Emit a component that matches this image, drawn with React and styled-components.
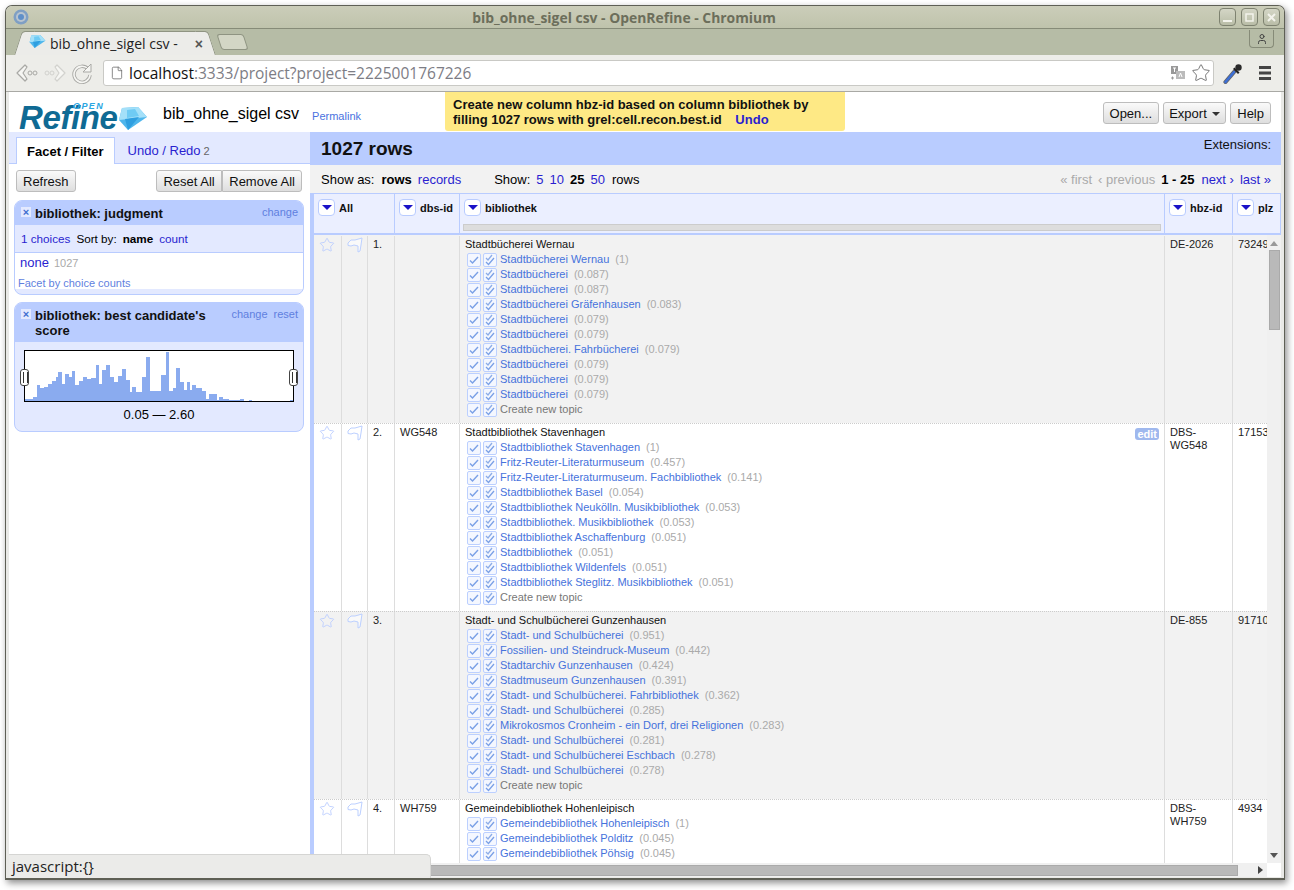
import React from "react";
import styled, { createGlobalStyle } from "styled-components";
import { Star, File as FileIcon, User } from "lucide-react";

const GlobalStyle = createGlobalStyle`
  html, body { margin: 0; padding: 0; background: #fff; }
  body { font-family: "Liberation Sans", Arial, sans-serif; font-size: 13px; color: #000; }
  * { box-sizing: border-box; }
  a { color: #2a1fd0; text-decoration: none; }
`;

const Desktop = styled.div`
  width: 1294px;
  height: 890px;
  padding: 5px 9px 10px 5px;
  overflow: hidden;
`;

const Win = styled.div`
  position: relative;
  width: 1280px;
  height: 875px;
  display: flex;
  flex-direction: column;
  border: 1px solid #5e5f55;
  border-bottom-width: 2px;
  border-radius: 7px 7px 0 0;
  background: #e9e9e6;
  box-shadow: 2px 3px 7px rgba(0, 0, 0, 0.45);
  overflow: hidden;
`;

const TitleBar = styled.div`
  height: 23px;
  flex: none;
  display: flex;
  align-items: center;
  padding: 0 4px 0 7px;
  background: linear-gradient(#cbcdb9, #bfc3ac);
  border-bottom: 1px solid #868b78;
`;

const WinTitle = styled.div`
  flex: 1;
  text-align: center;
  font: bold 13.9px "Open Sans", sans-serif;
  color: #6c6e5b;
`;

const WinButtons = styled.div`
  display: flex;
  gap: 5px;
`;

const WinButton = styled.div`
  width: 17px;
  height: 18px;
  border: 1px solid #7e8270;
  border-radius: 4px;
  display: flex;
  align-items: center;
  justify-content: center;
  background: linear-gradient(#d4d6c6, #b9bda7);
  color: #f3f3ec;
`;

const TabStrip = styled.div`
  height: 26px;
  flex: none;
  display: flex;
  align-items: flex-end;
  padding: 0 10px 0 14px;
  background: #b6bca6;
`;

const Tab = styled.div`
  position: relative;
  width: 182px;
  height: 24px;
  margin-left: 4px;
  padding-left: 5px;
  display: flex;
  align-items: center;
  gap: 4px;
  background: #ecece9;
  border-top: 1px solid #8f9482;
  font: 14px "Open Sans", sans-serif;
  color: #222;
  &::before, &::after {
    content: "";
    position: absolute;
    top: -1px;
    bottom: 0;
    width: 12px;
    background: #ecece9;
    border-top: 1px solid #8f9482;
  }
  &::before { left: -6px; transform: skewX(-18deg); border-left: 1px solid #8f9482; border-radius: 4px 0 0 0; }
  &::after { right: -6px; transform: skewX(18deg); border-right: 1px solid #8f9482; border-radius: 0 4px 0 0; }
`;

const TabText = styled.span`
  position: relative;
  z-index: 1;
  white-space: nowrap;
`;

const TabClose = styled.span`
  position: relative;
  z-index: 1;
  margin-left: auto;
  margin-right: 3px;
  font: bold 14px "Liberation Sans", sans-serif;
  color: #555;
`;

const NewTab = styled.div`
  width: 27px;
  height: 16px;
  margin: 0 0 5px 13px;
  background: #d3d6c5;
  border: 1px solid #8f9482;
  border-radius: 3px;
  transform: skewX(18deg);
`;

const ProfileButton = styled.div`
  margin-left: auto;
  margin-bottom: 7px;
  width: 25px;
  height: 18px;
  border: 1px solid #868b78;
  border-top: none;
  border-radius: 0 0 4px 4px;
  display: flex;
  align-items: center;
  justify-content: center;
  color: #444;
`;

const Toolbar = styled.div`
  height: 37px;
  flex: none;
  display: flex;
  align-items: center;
  padding: 0 10px 0 9px;
  background: #edede9;
  border-bottom: 1px solid #a9a9a5;
`;

const NavIcons = styled.div`
  display: flex;
  align-items: center;
  gap: 4px;
  width: 88px;
`;

const Omnibox = styled.div`
  width: 1111px;
  height: 26px;
  display: flex;
  align-items: center;
  gap: 5px;
  padding: 0 2px 1px 6px;
  background: #fff;
  border: 1px solid #c9c9c5;
  border-radius: 3px;
  font: 15.5px "Open Sans", sans-serif;
  color: #7d7d85;
`;

const Host = styled.span`
  color: #111;
`;

const OmniRight = styled.div`
  margin-left: auto;
  display: flex;
  align-items: center;
  gap: 5px;
`;

const ToolRight = styled.div`
  display: flex;
  align-items: center;
  gap: 15px;
  margin-left: 9px;
`;

const Page = styled.div`
  flex: 1;
  min-height: 0;
  margin: 0 3px 1px;
  display: flex;
  flex-direction: column;
  background: #fff;
`;

const Header = styled.div`
  height: 40px;
  flex: none;
  display: flex;
  align-items: flex-start;
  overflow: hidden;
`;

const Logo = styled.div`
  position: relative;
  width: 154px;
  height: 40px;
  flex: none;
  padding: 12px 0 0 10px;
  display: flex;
  font: italic bold 33px/28px "Liberation Sans", sans-serif;
  color: #0f6a94;
  letter-spacing: -0.4px;
`;

const LogoOpen = styled.span`
  position: absolute;
  left: 64px;
  top: 10px;
  font: italic bold 9px/9px "Liberation Sans", sans-serif;
  letter-spacing: 1.4px;
  color: #2ba6e2;
`;

const LogoGem = styled.span`
  margin: 3px 0 0 1px;
  line-height: 0;
`;

const ProjectName = styled.div`
  font-size: 16px;
  margin-top: 13px;
  white-space: nowrap;
`;

const Permalink = styled.a`
  font-size: 11px;
  margin: 18px 0 0 13px;
  color: #4a72e0;
`;

const Notice = styled.div`
  width: 400px;
  height: 39px;
  margin-left: 84px;
  padding: 5px 8px 0;
  background: #fee985;
  border-radius: 0 0 3px 3px;
  font: bold 13px/15px "Liberation Sans", sans-serif;
  color: #111;
  white-space: nowrap;
`;

const UndoLink = styled.a`
  margin-left: 10px;
`;

const HeaderButtons = styled.div`
  margin-left: auto;
  margin-top: 10px;
  padding-right: 10px;
  display: flex;
  gap: 4px;
`;

const Btn = styled.button`
  height: 22px;
  padding: 0 ${(p) => p.$pad || 6}px;
  font: 13px "Liberation Sans", sans-serif;
  color: #111;
  background: linear-gradient(#fafafa, #dedede);
  border: 1px solid #bdbdbd;
  border-radius: ${(p) => p.$radius || "3px"};
  white-space: nowrap;
`;

const Caret = styled.span`
  display: inline-block;
  margin-left: 5px;
  vertical-align: 2px;
  border: 4px solid transparent;
  border-top-color: #333;
  border-bottom: none;
`;

const Main = styled.div`
  flex: 1;
  min-height: 0;
  display: flex;
`;

const Side = styled.div`
  width: 301px;
  flex: none;
`;

const Tabs = styled.div`
  height: 32px;
  display: flex;
  align-items: flex-end;
  padding-left: 7px;
  background: #e3e9ff;
  border-bottom: 1px solid #b9ccff;
`;

const SideTab = styled.div`
  height: 27px;
  padding: 6px 10px 0 ${(p) => (p.$active ? 10 : 13)}px;
  margin-bottom: -1px;
  font-size: 13px;
  ${(p) => p.$active && "font-weight: bold; background: #fff; border: 1px solid #b9ccff; border-bottom: none;"}
`;

const TabCount = styled.span`
  font-size: 11px;
  color: #666;
  margin-left: 3px;
`;

const SideBar = styled.div`
  display: flex;
  justify-content: space-between;
  padding: 6px 8px 8px 7px;
`;

const BtnGroup = styled.div`
  display: flex;
`;

const Facet = styled.div`
  margin: 0 6px 7px 5px;
  background: #e3e9ff;
  border: 1px solid #b9ccff;
  border-radius: 8px;
  overflow: hidden;
`;

const FacetTitleRow = styled.div`
  display: flex;
  align-items: flex-start;
  padding: 5px 5px 4px 6px;
  background: #b9ccff;
  gap: 4px;
`;

const CloseBox = styled.span`
  width: 10px;
  height: 10px;
  flex: none;
  margin-top: 1px;
  display: flex;
  align-items: center;
  justify-content: center;
  background: #e3e9ff;
  font: bold 11px/10px "Liberation Sans", sans-serif;
  color: #3e6ed0;
`;

const FacetTitle = styled.div`
  flex: 1;
  font: bold 13px/15px "Liberation Sans", sans-serif;
  color: #111;
`;

const FacetLinks = styled.div`
  display: flex;
  gap: 6px;
  font-size: 11px;
  line-height: 13px;
  a { color: #5f7fe0; }
`;

const FacetControls = styled.div`
  height: 28px;
  display: flex;
  align-items: center;
  gap: 6px;
  padding: 0 6px;
  font-size: 11.7px;
  border-bottom: 1px solid #b9ccff;
`;

const FacetBody = styled.div`
  background: #fff;
  padding: 1px 5px 0 5px;
  height: 36px;
`;

const Choice = styled.div`
  font-size: 13px;
  line-height: 17px;
`;

const ChoiceCount = styled.span`
  font-size: 11px;
  color: #aaa;
  margin-left: 5px;
`;

const ChoiceFoot = styled.a`
  display: block;
  margin: 5px 0 0 -2px;
  font-size: 11px;
  line-height: 13px;
  color: #5f7fe0;
`;

const FacetFoot = styled.div`
  height: 5px;
`;

const HistWrap = styled.div`
  position: relative;
  margin: 8px 9px 0 9px;
  height: 52px;
  background: #fff;
  border: 1px solid #000;
`;

const Handle = styled.span`
  position: absolute;
  top: 18px;
  width: 9px;
  height: 17px;
  background: #fff;
  border: 1px solid #444;
  border-radius: 3px;
  left: ${(p) => (p.$right ? "auto" : "-5px")};
  right: ${(p) => (p.$right ? "-5px" : "auto")};
  &::after {
    content: "";
    position: absolute;
    left: 2px;
    top: 2px;
    width: 3px;
    height: 11px;
    border-left: 1px solid #333;
    border-right: 1px solid #333;
  }
`;

const HistRange = styled.div`
  text-align: center;
  font-size: 13px;
  line-height: 15px;
  padding: 5px 0 9px;
`;

const Right = styled.div`
  flex: 1;
  min-width: 0;
  display: flex;
  flex-direction: column;
`;

const Summary = styled.div`
  height: 33px;
  flex: none;
  display: flex;
  justify-content: space-between;
  padding: 5px 10px 0 11px;
  background: #b9ccff;
`;

const RowCount = styled.div`
  font: bold 19px/24px "Liberation Sans", sans-serif;
  color: #111;
`;

const Extensions = styled.div`
  font-size: 13px;
  line-height: 15px;
  color: #111;
`;

const ViewBar = styled.div`
  height: 28px;
  flex: none;
  display: flex;
  align-items: center;
  padding: 0 10px 0 11px;
  background: #f2f2f2;
  font-size: 13px;
  white-space: nowrap;
`;

const Gap = styled.span`
  margin-left: ${(p) => p.$w}px;
`;

const Muted = styled.span`
  color: #aaa;
`;

const Pager = styled.div`
  margin-left: auto;
`;

const TablePane = styled.div`
  flex: 1;
  min-height: 0;
  display: flex;
  flex-direction: column;
  border-left: 4px solid #b9ccff;
`;

const HeadRow = styled.div`
  height: 42px;
  flex: none;
  display: grid;
  grid-template-columns: 80px 65px 705px 68px 49px;
  background: #ebefff;
  border-top: 1px solid #b9ccff;
  border-bottom: 2px solid #b9ccff;
  border-right: 1px solid #b9ccff;
`;

const HeadCell = styled.div`
  position: relative;
  padding: 5px 0 0 4px;
  border-left: ${(p) => (p.$first ? "none" : "1px solid #b9ccff")};
  display: flex;
  align-items: flex-start;
  gap: 4px;
  font: bold 11px/18px "Liberation Sans", sans-serif;
  color: #111;
  overflow: hidden;
`;

const MenuBtn = styled.span`
  width: 17px;
  height: 17px;
  flex: none;
  display: flex;
  align-items: center;
  justify-content: center;
  background: #fff;
  border: 1px solid #b9ccff;
  border-radius: 4px;
  &::after {
    content: "";
    border: 5px solid transparent;
    border-top: 5px solid #1a12c8;
    border-bottom: none;
  }
`;

const ColBar = styled.div`
  position: absolute;
  left: 3px;
  right: 3px;
  top: 30px;
  height: 7px;
  background: #ddd;
  border: 1px solid #ccc;
`;

const BodyWrap = styled.div`
  flex: 1;
  min-height: 0;
  display: flex;
`;

const Rows = styled.div`
  flex: 1;
  min-width: 0;
  overflow: hidden;
`;

const VScroll = styled.div`
  width: 14px;
  flex: none;
  display: flex;
  flex-direction: column;
  align-items: center;
  padding-top: 6px;
  background: #f0f0f0;
`;

const ArrowUp = styled.span`
  border: 4px solid transparent;
  border-top: none;
  border-bottom: 5px solid #999;
`;

const ArrowDown = styled.span`
  margin-top: auto;
  margin-bottom: 5px;
  border: 4px solid transparent;
  border-bottom: none;
  border-top: 5px solid #555;
`;

const VThumb = styled.div`
  width: 11px;
  height: 80px;
  margin-top: 4px;
  background: #b9b9b9;
  border: 1px solid #aaa;
`;

const HScroll = styled.div`
  height: 14px;
  flex: none;
  display: flex;
  align-items: center;
  background: #f0f0f0;
`;

const HThumb = styled.div`
  width: 908px;
  height: 11px;
  margin-left: 16px;
  background: #b9b9b9;
  border: 1px solid #aaa;
`;

const ArrowRight = styled.span`
  margin-left: 20px;
  border: 4px solid transparent;
  border-right: none;
  border-left: 5px solid #444;
`;

const Corner = styled.div`
  width: 14px;
  height: 14px;
  margin-left: auto;
  background: #fff;
`;

const DataRow = styled.div`
  width: 1001px;
  height: 188px;
  display: grid;
  grid-template-columns: 27px 26px 27px 65px 705px 68px 83px;
  background: ${(p) => (p.$odd ? "#f2f2f2" : "#fff")};
  border-top: 1px dotted ${(p) => (p.$first ? "transparent" : "#ccc")};
`;

const Cell = styled.div`
  position: relative;
  padding: ${(p) => (p.$icon ? "1px 0 0 5px" : "2px 4px 0 5px")};
  border-left: ${(p) => (p.$first ? "none" : "1px solid #ddd")};
  font-size: 11px;
  line-height: 13px;
  color: #222;
`;

const Topic = styled.div`
  font-size: 11px;
  line-height: 13px;
  margin-bottom: 1px;
  color: #111;
`;

const Candidate = styled.div`
  display: flex;
  align-items: center;
  height: 15px;
  padding-left: 2px;
  font-size: 11px;
  white-space: nowrap;
`;

const Checks = styled.span`
  display: flex;
  gap: 2px;
  margin-right: 3px;
`;

const CandLink = styled.a`
  color: ${(p) => (p.$plain ? "#777" : "#4672dc")};
`;

const Score = styled.span`
  margin-left: 6px;
  color: #aaa;
`;

const EditBadge = styled.span`
  position: absolute;
  top: 4px;
  right: 5px;
  padding: 0 2px;
  background: #9fb8ee;
  border-radius: 3px;
  font: bold 11px/12px "Liberation Sans", sans-serif;
  color: #fff;
`;

const StatusBubble = styled.div`
  position: absolute;
  left: 3px;
  bottom: 0;
  width: 422px;
  height: 24px;
  padding: 1px 0 0 3px;
  background: #ebebe9;
  border-top: 1px solid #d5d5d3;
  border-right: 1px solid #d5d5d3;
  border-radius: 0 5px 0 0;
  font: 15px "Open Sans", sans-serif;
  color: #222;
`;

const bars = [
  [0, 8, 2], [8, 4, 4], [12, 3, 16], [15, 4, 13], [19, 4, 14], [23, 4, 17], [27, 4, 20], [31, 2, 24],
  [33, 4, 29], [37, 3, 17], [40, 4, 27], [44, 3, 24], [47, 3, 30], [50, 4, 16], [54, 4, 20], [58, 4, 24],
  [62, 4, 22], [66, 5, 23], [71, 3, 36], [74, 3, 17], [77, 4, 31], [81, 4, 36], [85, 4, 24], [89, 4, 19],
  [93, 4, 25], [97, 4, 32], [101, 4, 21], [105, 2, 9], [107, 4, 14], [111, 6, 9], [117, 4, 24], [121, 4, 44],
  [125, 2, 10], [127, 5, 10], [132, 4, 10], [136, 5, 26], [141, 3, 49], [144, 4, 10], [148, 3, 13], [151, 4, 33],
  [155, 4, 19], [159, 3, 11], [162, 3, 19], [165, 2, 11], [167, 4, 16], [171, 6, 13], [177, 4, 10], [181, 3, 2],
  [184, 8, 7], [192, 2, 1], [194, 4, 4], [198, 6, 2], [204, 11, 1], [215, 4, 2], [224, 3, 1], [265, 3, 1],
];

const rows = [
  {
    n: "1.", dbs: "", hbz: ["DE-2026"], plz: "73249", name: "Stadtbücherei Wernau",
    cands: [
      ["Stadtbücherei Wernau", "1"], ["Stadtbücherei", "0.087"], ["Stadtbücherei", "0.087"],
      ["Stadtbücherei Gräfenhausen", "0.083"], ["Stadtbücherei", "0.079"], ["Stadtbücherei", "0.079"],
      ["Stadtbücherei. Fahrbücherei", "0.079"], ["Stadtbücherei", "0.079"], ["Stadtbücherei", "0.079"],
      ["Stadtbücherei", "0.079"],
    ],
    create: true,
  },
  {
    n: "2.", dbs: "WG548", hbz: ["DBS-", "WG548"], plz: "17153", name: "Stadtbibliothek Stavenhagen", edit: true,
    cands: [
      ["Stadtbibliothek Stavenhagen", "1"], ["Fritz-Reuter-Literaturmuseum", "0.457"],
      ["Fritz-Reuter-Literaturmuseum. Fachbibliothek", "0.141"], ["Stadtbibliothek Basel", "0.054"],
      ["Stadtbibliothek Neukölln. Musikbibliothek", "0.053"], ["Stadtbibliothek. Musikbibliothek", "0.053"],
      ["Stadtbibliothek Aschaffenburg", "0.051"], ["Stadtbibliothek", "0.051"],
      ["Stadtbibliothek Wildenfels", "0.051"], ["Stadtbibliothek Steglitz. Musikbibliothek", "0.051"],
    ],
    create: true,
  },
  {
    n: "3.", dbs: "", hbz: ["DE-855"], plz: "91710", name: "Stadt- und Schulbücherei Gunzenhausen",
    cands: [
      ["Stadt- und Schulbücherei", "0.951"], ["Fossilien- und Steindruck-Museum", "0.442"],
      ["Stadtarchiv Gunzenhausen", "0.424"], ["Stadtmuseum Gunzenhausen", "0.391"],
      ["Stadt- und Schulbücherei. Fahrbibliothek", "0.362"], ["Stadt- und Schulbücherei", "0.285"],
      ["Mikrokosmos Cronheim - ein Dorf, drei Religionen", "0.283"], ["Stadt- und Schulbücherei", "0.281"],
      ["Stadt- und Schulbücherei Eschbach", "0.278"], ["Stadt- und Schulbücherei", "0.278"],
    ],
    create: true,
  },
  {
    n: "4.", dbs: "WH759", hbz: ["DBS-", "WH759"], plz: "4934", name: "Gemeindebibliothek Hohenleipisch",
    cands: [
      ["Gemeindebibliothek Hohenleipisch", "1"], ["Gemeindebibliothek Polditz", "0.045"],
      ["Gemeindebibliothek Pöhsig", "0.045"],
    ],
  },
];

function ChromeIcon() {
  return (
    <svg width="16" height="16" viewBox="0 0 16 16">
      <circle cx="8" cy="8" r="7.5" fill="#7f9fc4" />
      <circle cx="8" cy="8" r="5" fill="#b9c4cf" />
      <circle cx="8" cy="8" r="3" fill="#5f8fc9" />
    </svg>
  );
}

function Diamond({ size = 30 }) {
  return (
    <svg width={size} height={size * 0.8} viewBox="0 0 30 24">
      <path d="M4 1L20 0l9 10-19 13L1 13z" fill="#4fb6ec" />
      <path d="M4 1L20 0l9 10L1 13z" fill="#a4e0f9" />
      <path d="M9 3l8-1 4 7-12 2z" fill="#6fcbf4" />
      <path d="M7 12l14-2-11 13z" fill="#2f9fe0" />
    </svg>
  );
}

function NavArrow({ flip, light }) {
  const c = light ? "#d2d2ce" : "#a9a9a5";
  return (
    <svg width="24" height="22" viewBox="0 0 24 22" style={flip ? { transform: "scaleX(-1)" } : undefined}>
      <path d="M10 3L2 11l8 8 2-2-4-6 4-6z" fill="#f6f6f3" stroke={c} strokeWidth="1.2" strokeLinejoin="round" />
      <circle cx="15" cy="11" r="2" fill="none" stroke={c} />
      <circle cx="20" cy="11" r="2" fill="none" stroke={c} />
    </svg>
  );
}

function Reload() {
  return (
    <svg width="22" height="22" viewBox="0 0 22 22">
      <path d="M17 7a8 8 0 1 0 2 6" fill="none" stroke="#a9a9a5" strokeWidth="3.4" />
      <path d="M17 7a8 8 0 1 0 2 6" fill="none" stroke="#f6f6f3" strokeWidth="1.6" />
      <path d="M20 2v8h-8z" fill="#f6f6f3" stroke="#a9a9a5" />
    </svg>
  );
}

function Translate() {
  return (
    <svg width="16" height="16" viewBox="0 0 16 16">
      <rect x="1" y="1" width="7" height="8" fill="#999" />
      <rect x="6" y="6" width="9" height="8" fill="#bbb" />
      <path d="M3 3h3M4.500 3v4" stroke="#fff" />
      <path d="M9 12l1.500-4 1.500 4" stroke="#fff" fill="none" />
      <path d="M1 13h3M2.500 11.500v3" stroke="#999" />
    </svg>
  );
}

function Dropper() {
  return (
    <svg width="20" height="22" viewBox="0 0 20 22">
      <path d="M2.500 20L11 10" stroke="#666" strokeWidth="4.200" strokeLinecap="round" />
      <path d="M2.500 20L11 10" stroke="#3c6fd6" strokeWidth="2.600" strokeLinecap="round" />
      <path d="M10 7l5 5 1.500-1.500-5-5z" fill="#222" />
      <circle cx="15.500" cy="5.500" r="3.200" fill="#2a2a2a" />
    </svg>
  );
}

function Hamburger() {
  return (
    <svg width="14" height="14" viewBox="0 0 14 14">
      <path d="M1 0h12v3H1zM1 5.500h12v3H1zM1 11h12v3H1z" fill="#444" />
    </svg>
  );
}

function FlagIcon() {
  return (
    <svg width="16" height="16" viewBox="0 0 16 16">
      <path
        d="M1 6l3-3h4l7-2-1 7-1 6-2 1V9L7 8 4 9 1 8.500z"
        fill="#fff"
        fillOpacity="0.5"
        stroke="#bcd0ff"
        strokeLinejoin="round"
      />
    </svg>
  );
}

function CheckBoxIcon({ double }) {
  return (
    <svg width="14" height="14" viewBox="0 0 14 14">
      <rect x="0.500" y="0.500" width="13" height="13" rx="1.500" fill="#f4f7ff" stroke="#bcd0ff" />
      {double ? (
        <>
          <path d="M3 5l2 2 4-5" fill="none" stroke="#8dade8" strokeWidth="1.300" />
          <path d="M3 9l2.500 2.500L11 5" fill="none" stroke="#7aa0e6" strokeWidth="1.300" />
        </>
      ) : (
        <path d="M3 7.500l2.500 2.500L11 4" fill="none" stroke="#7aa0e6" strokeWidth="1.400" />
      )}
    </svg>
  );
}

function CandidateRow({ label, score, plain }) {
  return (
    <Candidate>
      <Checks>
        <CheckBoxIcon />
        <CheckBoxIcon double />
      </Checks>
      <CandLink $plain={plain}>{label}</CandLink>
      {score && <Score>({score})</Score>}
    </Candidate>
  );
}

export default function App() {
  return (
    <Desktop>
      <GlobalStyle />
      <Win>
        <TitleBar>
          <ChromeIcon />
          <WinTitle>bib_ohne_sigel csv - OpenRefine - Chromium</WinTitle>
          <WinButtons>
            <WinButton>
              <svg width="9" height="9" viewBox="0 0 9 9"><path d="M0 7h9v2H0z" fill="currentColor" /></svg>
            </WinButton>
            <WinButton>
              <svg width="9" height="9" viewBox="0 0 9 9"><rect x="1" y="1" width="7" height="7" fill="none" stroke="currentColor" strokeWidth="1.500" /></svg>
            </WinButton>
            <WinButton>
              <svg width="9" height="9" viewBox="0 0 9 9"><path d="M1 1l7 7M8 1L1 8" stroke="currentColor" strokeWidth="2" /></svg>
            </WinButton>
          </WinButtons>
        </TitleBar>
        <TabStrip>
          <Tab>
            <TabText><Diamond size={17} /></TabText>
            <TabText>bib_ohne_sigel csv -</TabText>
            <TabClose>×</TabClose>
          </Tab>
          <NewTab />
          <ProfileButton><User size={12} strokeWidth={2} /></ProfileButton>
        </TabStrip>
        <Toolbar>
          <NavIcons>
            <NavArrow />
            <NavArrow flip light />
            <Reload />
          </NavIcons>
          <Omnibox>
            <FileIcon size={14} strokeWidth={1.3} color="#666" />
            <span><Host>localhost</Host>:3333/project?project=2225001767226</span>
            <OmniRight>
              <Translate />
              <Star size={20} strokeWidth={1.2} color="#777" />
            </OmniRight>
          </Omnibox>
          <ToolRight>
            <Dropper />
            <Hamburger />
          </ToolRight>
        </Toolbar>
        <Page>
          <Header>
            <Logo>
              Refine
              <LogoOpen>OPEN</LogoOpen>
              <LogoGem><Diamond size={30} /></LogoGem>
            </Logo>
            <ProjectName>bib_ohne_sigel csv</ProjectName>
            <Permalink>Permalink</Permalink>
            <Notice>
              Create new column hbz-id based on column bibliothek by<br />
              filling 1027 rows with grel:cell.recon.best.id <UndoLink>Undo</UndoLink>
            </Notice>
            <HeaderButtons>
              <Btn $pad={5.5}>Open...</Btn>
              <Btn $pad={5.5}>Export<Caret /></Btn>
              <Btn>Help</Btn>
            </HeaderButtons>
          </Header>
          <Main>
            <Side>
              <Tabs>
                <SideTab $active>Facet / Filter</SideTab>
                <SideTab><a>Undo / Redo</a><TabCount>2</TabCount></SideTab>
              </Tabs>
              <SideBar>
                <Btn>Refresh</Btn>
                <BtnGroup>
                  <Btn $pad={6.5} $radius="3px 0 0 3px">Reset All</Btn>
                  <Btn $radius="0 3px 3px 0">Remove All</Btn>
                </BtnGroup>
              </SideBar>
              <Facet>
                <FacetTitleRow>
                  <CloseBox>×</CloseBox>
                  <FacetTitle>bibliothek: judgment</FacetTitle>
                  <FacetLinks><a>change</a></FacetLinks>
                </FacetTitleRow>
                <FacetControls>
                  <a>1 choices</a>
                  <span>Sort by:</span>
                  <b>name</b>
                  <a>count</a>
                </FacetControls>
                <FacetBody>
                  <Choice><a>none</a><ChoiceCount>1027</ChoiceCount></Choice>
                  <ChoiceFoot>Facet by choice counts</ChoiceFoot>
                </FacetBody>
                <FacetFoot />
              </Facet>
              <Facet>
                <FacetTitleRow>
                  <CloseBox>×</CloseBox>
                  <FacetTitle>bibliothek: best candidate's score</FacetTitle>
                  <FacetLinks><a>change</a><a>reset</a></FacetLinks>
                </FacetTitleRow>
                <HistWrap>
                  <svg width="268" height="50" viewBox="0 0 268 50">
                    {bars.map(([x, w, h]) => (
                      <rect key={x} x={x} y={50 - h} width={w} height={h} fill="#8aabef" />
                    ))}
                  </svg>
                  <Handle />
                  <Handle $right />
                </HistWrap>
                <HistRange>0.05 — 2.60</HistRange>
              </Facet>
            </Side>
            <Right>
              <Summary>
                <RowCount>1027 rows</RowCount>
                <Extensions>Extensions:</Extensions>
              </Summary>
              <ViewBar>
                Show as:<Gap $w={7} /><b>rows</b><Gap $w={6} /><a>records</a>
                <Gap $w={33} />Show:<Gap $w={6} /><a>5</a><Gap $w={6} /><a>10</a><Gap $w={6} /><b>25</b><Gap $w={6} /><a>50</a><Gap $w={7} />rows
                <Pager>
                  <Muted>« first</Muted><Gap $w={6} /><Muted>‹ previous</Muted><Gap $w={6} />
                  <b>1 - 25</b><Gap $w={7} /><a>next ›</a><Gap $w={6} /><a>last »</a>
                </Pager>
              </ViewBar>
              <TablePane>
                <HeadRow>
                  <HeadCell $first><MenuBtn />All</HeadCell>
                  <HeadCell><MenuBtn />dbs-id</HeadCell>
                  <HeadCell><MenuBtn />bibliothek<ColBar /></HeadCell>
                  <HeadCell><MenuBtn />hbz-id</HeadCell>
                  <HeadCell><MenuBtn />plz</HeadCell>
                </HeadRow>
                <BodyWrap>
                  <Rows>
                    {rows.map((r, i) => (
                      <DataRow key={r.n} $odd={i % 2 === 0} $first={i === 0}>
                        <Cell $icon $first><Star size={16} strokeWidth={1.3} color="#b9ccff" /></Cell>
                        <Cell $icon><FlagIcon /></Cell>
                        <Cell>{r.n}</Cell>
                        <Cell>{r.dbs}</Cell>
                        <Cell>
                          <Topic>{r.name}</Topic>
                          {r.edit && <EditBadge>edit</EditBadge>}
                          {r.cands.map(([label, score], j) => (
                            <CandidateRow key={j} label={label} score={score} />
                          ))}
                          {r.create && <CandidateRow label="Create new topic" plain />}
                        </Cell>
                        <Cell>{r.hbz.map((t) => <div key={t}>{t}</div>)}</Cell>
                        <Cell>{r.plz}</Cell>
                      </DataRow>
                    ))}
                  </Rows>
                  <VScroll>
                    <ArrowUp />
                    <VThumb />
                    <ArrowDown />
                  </VScroll>
                </BodyWrap>
                <HScroll>
                  <HThumb />
                  <ArrowRight />
                  <Corner />
                </HScroll>
              </TablePane>
            </Right>
          </Main>
        </Page>
        <StatusBubble>javascript:{"{}"}</StatusBubble>
      </Win>
    </Desktop>
  );
}
